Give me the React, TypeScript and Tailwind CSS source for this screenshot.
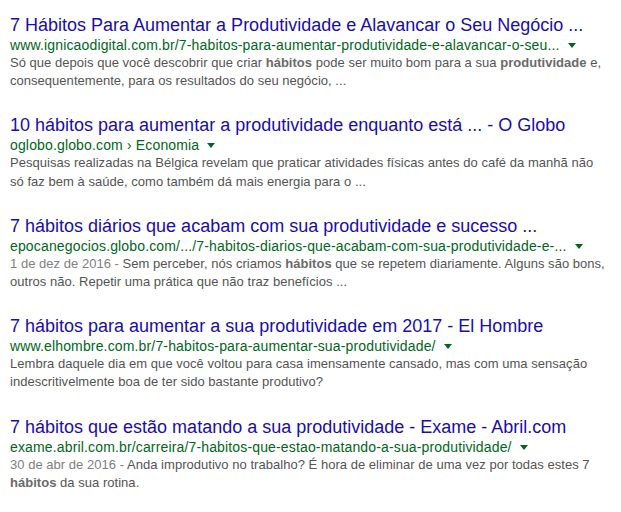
import React from 'react';

type Part = string | { b: string };

interface Result {
  title: string;
  url: React.ReactNode;
  date?: string;
  snippet: Part[][];
}

const results: Result[] = [
  {
    title: '7 Hábitos Para Aumentar a Produtividade e Alavancar o Seu Negócio ...',
    url: 'www.ignicaodigital.com.br/7-habitos-para-aumentar-produtividade-e-alavancar-o-seu...',
    snippet: [
      ['Só que depois que você descobrir que criar ', { b: 'hábitos' }, ' pode ser muito bom para a sua ', { b: 'produtividade' }, ' e,'],
      ['consequentemente, para os resultados do seu negócio, ...'],
    ],
  },
  {
    title: '10 hábitos para aumentar a produtividade enquanto está ... - O Globo',
    url: (
      <>
        oglobo.globo.com <span className="text-[#006621]">›</span> Economia
      </>
    ),
    snippet: [
      ['Pesquisas realizadas na Bélgica revelam que praticar atividades físicas antes do café da manhã não'],
      ['só faz bem à saúde, como também dá mais energia para o ...'],
    ],
  },
  {
    title: '7 hábitos diários que acabam com sua produtividade e sucesso ...',
    url: 'epocanegocios.globo.com/.../7-habitos-diarios-que-acabam-com-sua-produtividade-e-...',
    date: '1 de dez de 2016 - ',
    snippet: [
      ['Sem perceber, nós criamos ', { b: 'hábitos' }, ' que se repetem diariamente. Alguns são bons,'],
      ['outros não. Repetir uma prática que não traz benefícios ...'],
    ],
  },
  {
    title: '7 hábitos para aumentar a sua produtividade em 2017 - El Hombre',
    url: 'www.elhombre.com.br/7-habitos-para-aumentar-sua-produtividade/',
    snippet: [
      ['Lembra daquele dia em que você voltou para casa imensamente cansado, mas com uma sensação'],
      ['indescritivelmente boa de ter sido bastante produtivo?'],
    ],
  },
  {
    title: '7 hábitos que estão matando a sua produtividade - Exame - Abril.com',
    url: 'exame.abril.com.br/carreira/7-habitos-que-estao-matando-a-sua-produtividade/',
    date: '30 de abr de 2016 - ',
    snippet: [
      ['Anda improdutivo no trabalho? É hora de eliminar de uma vez por todas estes 7'],
      [{ b: 'hábitos' }, ' da sua rotina.'],
    ],
  },
];

function Line({ parts, date }: { parts: Part[]; date?: string }) {
  return (
    <div className="whitespace-nowrap">
      {date && <span className="text-[#808080]">{date}</span>}
      {parts.map((p, i) =>
        typeof p === 'string' ? (
          <span key={i}>{p}</span>
        ) : (
          <b key={i} className="font-bold text-[#6a6a6a]">
            {p.b}
          </b>
        ),
      )}
    </div>
  );
}

function ResultItem({ r }: { r: Result }) {
  return (
    <div className="mb-[24px]">
      <div className="text-[18px] leading-[22px] text-[#1a0dab] whitespace-nowrap">{r.title}</div>
      <div className="flex items-center text-[14px] leading-[18px] text-[#006621] whitespace-nowrap">
        <span className="tracking-[0.15px]">{r.url}</span>
        <span className="ml-[8px] mt-[1px] w-0 h-0 border-l-[4px] border-r-[4px] border-t-[5px] border-l-transparent border-r-transparent border-t-[#006621]" />
      </div>
      <div className="text-[13px] leading-[18.2px] text-[#545454] tracking-[0.03px]">
        {r.snippet.map((parts, i) => (
          <Line key={i} parts={parts} date={i === 0 ? r.date : undefined} />
        ))}
      </div>
    </div>
  );
}

export default function App() {
  return (
    <div className="w-[621px] h-[512px] bg-white overflow-hidden pl-[10px] pt-[14px] font-['Liberation_Sans',Arial,sans-serif]">
      {results.map((r, i) => (
        <ResultItem key={i} r={r} />
      ))}
    </div>
  );
}
